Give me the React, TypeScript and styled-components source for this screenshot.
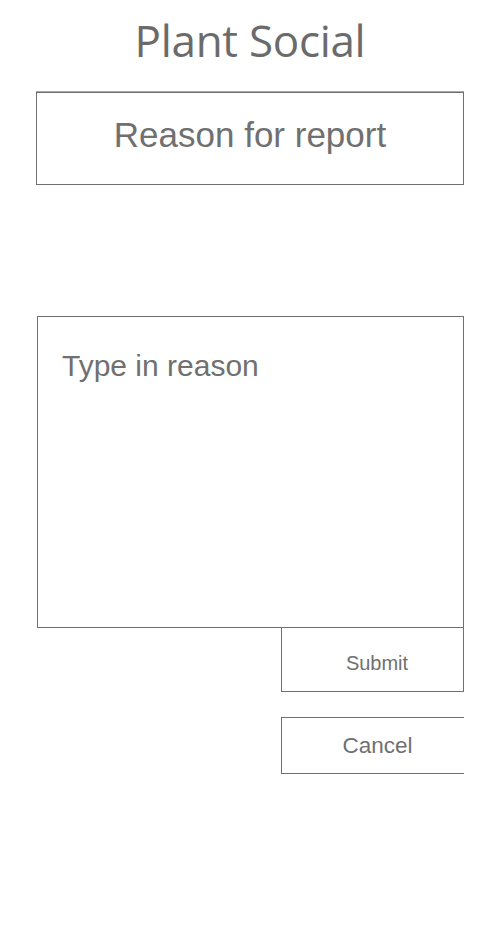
import React from 'react';
import { styled, createGlobalStyle } from 'styled-components';

const GlobalStyle = createGlobalStyle`
  body {
    margin: 0;
    background: #ffffff;
  }
`;

const Page = styled.div`
  width: 500px;
  min-height: 937px;
  box-sizing: border-box;
  padding: 0 36px;
  display: flex;
  flex-direction: column;
  color: #707070;
  font-family: 'Liberation Sans', Arial, sans-serif;
`;

const Header = styled.h1`
  margin: 0;
  height: 91px;
  padding-top: 12px;
  box-sizing: border-box;
  text-align: center;
  font-family: 'Open Sans', 'Noto Sans', sans-serif;
  font-weight: 400;
  font-size: 44px;
  letter-spacing: -0.3px;
  line-height: 56px;
  color: #6b6b6b;
`;

const ReasonBox = styled.div`
  height: 93px;
  box-sizing: border-box;
  border: 1px solid #707070;
  box-shadow: 0 -1px 0 #a8a8a8;
  margin-top: 1px;
  display: flex;
  justify-content: center;
  padding-top: 22px;
  font-size: 35px;
  line-height: 40px;
`;

const ReasonInput = styled.textarea`
  margin: 131px 0 0 1px;
  height: 312px;
  box-sizing: border-box;
  border: 1px solid #707070;
  border-radius: 0;
  padding: 32px 24px;
  resize: none;
  outline: none;
  font-family: 'Liberation Sans', Arial, sans-serif;
  font-size: 30px;
  color: #707070;

  &::placeholder {
    color: #707070;
    opacity: 1;
  }
`;

const Actions = styled.div`
  display: flex;
  flex-direction: column;
  align-items: flex-end;
  gap: 25px;
`;

const ActionButton = styled.button<{ $variant: 'submit' | 'cancel' }>`
  width: 183px;
  box-sizing: border-box;
  background: #ffffff;
  border: 1px solid #707070;
  border-radius: 0;
  padding: 0 0 0 9px;
  font-family: 'Liberation Sans', Arial, sans-serif;
  color: #707070;
  cursor: pointer;
  height: ${(p) => (p.$variant === 'submit' ? '64px' : '57px')};
  font-size: ${(p) => (p.$variant === 'submit' ? '20px' : '22.5px')};
  border-top: ${(p) => (p.$variant === 'submit' ? 'none' : '1px solid #707070')};
  border-right: ${(p) => (p.$variant === 'cancel' ? 'none' : '1px solid #707070')};
  padding-top: ${(p) => (p.$variant === 'submit' ? '7px' : '0')};
`;

export default function App() {
  return (
    <>
      <GlobalStyle />
      <Page>
        <Header>Plant Social</Header>
        <ReasonBox>Reason for report</ReasonBox>
        <ReasonInput placeholder='Type in reason' />
        <Actions>
          <ActionButton $variant='submit'>Submit</ActionButton>
          <ActionButton $variant='cancel'>Cancel</ActionButton>
        </Actions>
      </Page>
    </>
  );
}
